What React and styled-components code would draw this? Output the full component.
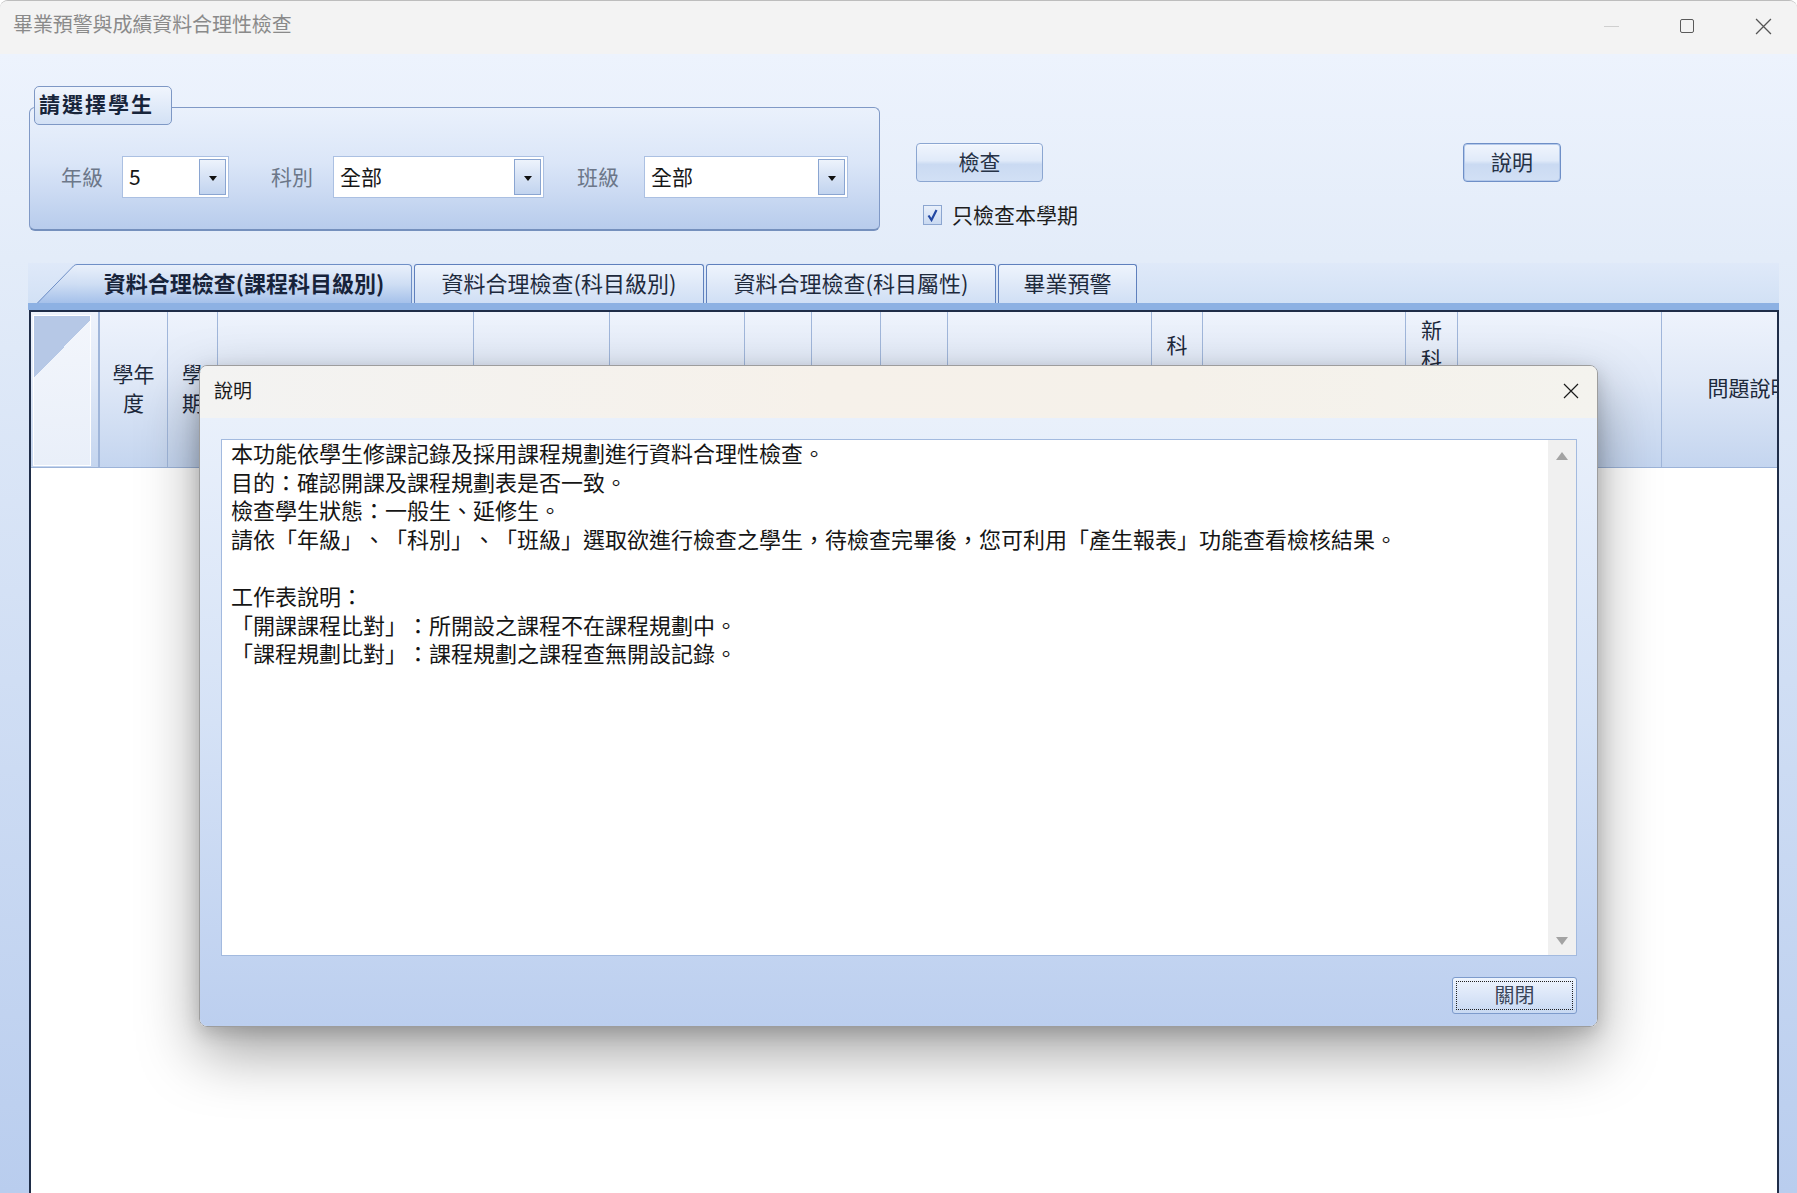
import React from 'react'
import styled, { createGlobalStyle } from 'styled-components'

const GlobalStyle = createGlobalStyle`
  html, body {
    margin: 0;
    padding: 0;
    width: 1797px;
    height: 1193px;
    overflow: hidden;
    background: #ffffff;
  }
  body {
    font-family: "Noto Sans CJK TC", "Noto Sans", sans-serif;
    text-spacing-trim: space-all;
  }
  * {
    box-sizing: border-box;
  }
`

const columns = [
  { w: 69, corner: true },
  { w: 68, label: '學年度' },
  { w: 50, label: '學期' },
  { w: 256 },
  { w: 136 },
  { w: 135 },
  { w: 67 },
  { w: 69 },
  { w: 67 },
  { w: 204 },
  { w: 51, label: '科目級別' },
  { w: 203 },
  { w: 52, label: '新科目級別' },
  { w: 204 },
  { w: 176, label: '問題說明' },
]

const helpText = `本功能依學生修課記錄及採用課程規劃進行資料合理性檢查。
目的：確認開課及課程規劃表是否一致。
檢查學生狀態：一般生、延修生。
請依「年級」、「科別」、「班級」選取欲進行檢查之學生，待檢查完畢後，您可利用「產生報表」功能查看檢核結果。

工作表說明：
「開課課程比對」：所開設之課程不在課程規劃中。
「課程規劃比對」：課程規劃之課程查無開設記錄。`

const tabs = [
  { label: '資料合理檢查(科目級別)', w: 290 },
  { label: '資料合理檢查(科目屬性)', w: 290 },
  { label: '畢業預警', w: 139 },
]

const App = () => {
  return (
    <>
      <GlobalStyle />
      <Window>
        <TitleBar>
          <WindowTitle>畢業預警與成績資料合理性檢查</WindowTitle>
          <Controls>
            <ControlButton>
              <MinimizeLine />
            </ControlButton>
            <ControlButton>
              <MaximizeBox />
            </ControlButton>
            <ControlButton>
              <CrossIcon size={17} color="#555" />
            </ControlButton>
          </Controls>
        </TitleBar>

        <Body>
          <TopRow>
            <GroupBox>
              <Legend>請選擇學生</Legend>
              <Frame>
                <Field>
                  <FieldLabel>年級</FieldLabel>
                  <Combo $w={107} $gap={17}>
                    <ComboText>5</ComboText>
                    <DropButton>
                      <DropArrow />
                    </DropButton>
                  </Combo>
                </Field>
                <Field $ml={42}>
                  <FieldLabel>科別</FieldLabel>
                  <Combo $w={211} $gap={18}>
                    <ComboText>全部</ComboText>
                    <DropButton>
                      <DropArrow />
                    </DropButton>
                  </Combo>
                </Field>
                <Field $ml={33}>
                  <FieldLabel>班級</FieldLabel>
                  <Combo $w={204} $gap={23}>
                    <ComboText>全部</ComboText>
                    <DropButton>
                      <DropArrow />
                    </DropButton>
                  </Combo>
                </Field>
              </Frame>
            </GroupBox>

            <ActionsColumn>
              <OfficeButton $w={127}>檢查</OfficeButton>
              <CheckRow>
                <CheckBox>
                  <svg width="13" height="14" viewBox="0 0 13 14">
                    <path d="M2.5 7.5 L5.5 12 L10.5 2" fill="none" stroke="#2348a3" strokeWidth="2.2" />
                  </svg>
                </CheckBox>
                <CheckLabel>只檢查本學期</CheckLabel>
              </CheckRow>
            </ActionsColumn>

            <HelpButton $w={98} $default>
              說明
            </HelpButton>
          </TopRow>

          <TabControl>
            <TabStrip>
              <SelectedTab>
                <svg width="40" height="39" viewBox="0 0 40 39">
                  <defs>
                    <linearGradient id="selTab" x1="0" y1="0" x2="0" y2="1">
                      <stop offset="0" stopColor="#e9f0fb" />
                      <stop offset="0.5" stopColor="#cfdef4" />
                      <stop offset="1" stopColor="#a5c1ea" />
                    </linearGradient>
                  </defs>
                  <path d="M0 39 L36.5 2 Q38 0.5 40 0.5 L40 39 Z" fill="url(#selTab)" />
                  <path d="M0.5 39 L36.5 2 Q38 0.5 40 0.5" fill="none" stroke="#6f8fc6" strokeWidth="1" />
                </svg>
                <SelectedTabBody>資料合理檢查(課程科目級別)</SelectedTabBody>
              </SelectedTab>
              {tabs.map((t) => (
                <Tab key={t.label} $w={t.w}>
                  {t.label}
                </Tab>
              ))}
            </TabStrip>

            <TabPanel>
              <Grid>
                <HeaderRow $cols={columns.map((c) => c.w + 'px').join(' ')}>
                  {columns.map((c, i) =>
                    c.corner ? (
                      <CornerCell key={i}>
                        <CornerInner />
                      </CornerCell>
                    ) : (
                      <HeaderCell key={i}>{c.label || ''}</HeaderCell>
                    )
                  )}
                </HeaderRow>
                <GridBody />
              </Grid>
            </TabPanel>
          </TabControl>
        </Body>

        <Dialog>
          <DialogTitleBar>
            <DialogTitle>說明</DialogTitle>
            <DialogClose>
              <CrossIcon size={16} color="#1a1a1a" />
            </DialogClose>
          </DialogTitleBar>
          <DialogBody>
            <TextBox>
              <TextContent>{helpText}</TextContent>
              <ScrollBar>
                <ScrollArrow $up />
                <ScrollArrow />
              </ScrollBar>
            </TextBox>
            <CloseButton>
              <FocusRing>關閉</FocusRing>
            </CloseButton>
          </DialogBody>
        </Dialog>
      </Window>
    </>
  )
}

const CrossIcon = ({ size, color }) => (
  <svg width={size} height={size} viewBox="0 0 16 16">
    <path d="M1 1 L15 15 M15 1 L1 15" stroke={color} strokeWidth="1.2" fill="none" />
  </svg>
)

const Window = styled.div`
  position: relative;
  width: 1797px;
  height: 1193px;
  display: flex;
  flex-direction: column;
  overflow: hidden;
  border-top: 1px solid #bdbdbd;
  border-radius: 8px 8px 0 0;
  background: #f3f3f3;
`

const TitleBar = styled.div`
  height: 53px;
  flex-shrink: 0;
  display: flex;
  align-items: center;
  padding-left: 13px;
  background: #f3f3f3;
`

const WindowTitle = styled.div`
  font-size: 20px;
  color: #8a8a8a;
  letter-spacing: -0.1px;
  margin-bottom: 8px;
`

const Controls = styled.div`
  margin-left: auto;
  display: flex;
  height: 100%;
  margin-right: -4px;
`

const ControlButton = styled.div`
  width: 76px;
  height: 100%;
  display: flex;
  align-items: center;
  justify-content: center;
  padding-bottom: 3px;
`

const MinimizeLine = styled.div`
  width: 15px;
  height: 1px;
  background: #cfcfcf;
`

const MaximizeBox = styled.div`
  width: 14px;
  height: 14px;
  border: 1px solid #5a5a5a;
  border-radius: 2px;
`

const Body = styled.div`
  flex: 1;
  display: flex;
  flex-direction: column;
  padding: 32px 18px 0 28px;
  background: linear-gradient(180deg, #edf3fd 0%, #e3ecf9 18%, #d0def4 55%, #b9cdee 100%);
  min-height: 0;
`

const TopRow = styled.div`
  display: flex;
  align-items: flex-start;
  flex-shrink: 0;
  height: 145px;
`

const GroupBox = styled.div`
  width: 851px;
  margin-left: 1px;
  display: flex;
  flex-direction: column;
`

const Legend = styled.div`
  position: relative;
  z-index: 1;
  align-self: flex-start;
  margin-left: 5px;
  margin-bottom: -18px;
  width: 138px;
  height: 39px;
  padding: 0 0 5px 4px;
  display: flex;
  align-items: center;
  border: 1px solid #7e98c5;
  border-radius: 5px;
  background: linear-gradient(180deg, #f0f5fd 0%, #d3e1f5 100%);
  font-size: 21px;
  font-weight: bold;
  letter-spacing: 2px;
  color: #17243a;
`

const Frame = styled.div`
  height: 124px;
  display: flex;
  align-items: center;
  padding: 17px 0 0 31px;
  border: 1px solid #8099c6;
  border-bottom: 2px solid #7590bd;
  border-radius: 6px;
  background: linear-gradient(180deg, #eaf1fc 0%, #dbe6f8 45%, #b8ccec 100%);
`

const Field = styled.div`
  display: flex;
  align-items: center;
  margin-left: ${(p) => p.$ml || 0}px;
`

const FieldLabel = styled.div`
  width: 44px;
  font-size: 21px;
  color: #6c7789;
  white-space: nowrap;
  margin-bottom: 3px;
`

const Combo = styled.div`
  width: ${(p) => p.$w}px;
  height: 42px;
  margin-left: ${(p) => p.$gap}px;
  display: flex;
  align-items: center;
  padding-left: 6px;
  background: #ffffff;
  border: 1px solid #abc0e2;
`

const ComboText = styled.div`
  font-size: 21px;
  color: #161616;
  margin-bottom: 3px;
`

const DropButton = styled.div`
  margin-left: auto;
  margin-right: 2px;
  width: 27px;
  height: 36px;
  display: flex;
  align-items: center;
  justify-content: center;
  border: 1px solid #8aa5d1;
  background: linear-gradient(180deg, #edf3fc 0%, #d6e2f5 50%, #c2d4ef 100%);
`

const DropArrow = styled.div`
  width: 0;
  height: 0;
  border-left: 4px solid transparent;
  border-right: 4px solid transparent;
  border-top: 5px solid #111;
  margin-top: 2px;
`

const ActionsColumn = styled.div`
  width: 170px;
  margin-left: 36px;
  margin-top: 57px;
  display: flex;
  flex-direction: column;
`

const OfficeButton = styled.div`
  width: ${(p) => p.$w}px;
  height: 39px;
  display: flex;
  align-items: center;
  justify-content: center;
  padding-bottom: 4px;
  font-size: 21px;
  color: #263246;
  border: 1px solid ${(p) => (p.$default ? '#6e8fc7' : '#8ba6d1')};
  border-radius: 4px;
  box-shadow: ${(p) => (p.$default ? 'inset 0 0 0 1px #b4c9ea' : 'inset 0 1px 0 #f7faff')};
  background: linear-gradient(180deg, #f0f5fd 0%, #e0eaf9 45%, #cadaf2 55%, #d2e0f5 100%);
`

const HelpButton = styled(OfficeButton)`
  margin-left: 377px;
  margin-top: 57px;
`

const CheckRow = styled.div`
  margin-top: 23px;
  margin-left: 7px;
  height: 20px;
  display: flex;
  align-items: center;
  gap: 10px;
`

const CheckBox = styled.div`
  width: 19px;
  height: 20px;
  flex-shrink: 0;
  display: flex;
  align-items: center;
  justify-content: center;
  border: 1px solid #8ca6d0;
  background: linear-gradient(180deg, #e9f0fb 0%, #c9d9f1 100%);
`

const CheckLabel = styled.div`
  font-size: 21px;
  line-height: 20px;
  color: #1e1e1e;
  white-space: nowrap;
  margin-bottom: 2px;
`

const TabControl = styled.div`
  margin-top: 32px;
  width: 1751px;
  flex: 1;
  display: flex;
  flex-direction: column;
  min-height: 0;
`

const TabStrip = styled.div`
  height: 40px;
  flex-shrink: 0;
  display: flex;
  align-items: flex-end;
  gap: 2px;
  padding-left: 9px;
  background: linear-gradient(180deg, #dfe9f9 0%, #d2e1f5 100%);
`

const SelectedTab = styled.div`
  height: 39px;
  display: flex;
  svg {
    display: block;
    flex-shrink: 0;
  }
`

const SelectedTabBody = styled.div`
  width: 335px;
  height: 39px;
  display: flex;
  align-items: center;
  justify-content: center;
  padding-bottom: 4px;
  border-top: 1px solid #6f8fc6;
  border-right: 1px solid #6f8fc6;
  border-radius: 0 4px 0 0;
  background: linear-gradient(180deg, #e9f0fb 0%, #cfdef4 50%, #a5c1ea 100%);
  font-size: 22px;
  font-weight: bold;
  color: #17233a;
  white-space: nowrap;
`

const Tab = styled.div`
  width: ${(p) => p.$w}px;
  height: 39px;
  display: flex;
  align-items: center;
  justify-content: center;
  padding-bottom: 4px;
  border: 1px solid #5f80bd;
  border-bottom: none;
  border-radius: 3px 3px 0 0;
  background: linear-gradient(180deg, #eef4fd 0%, #dfe9f8 50%, #d0dff5 100%);
  font-size: 22px;
  color: #1e2a3d;
  white-space: nowrap;
`

const TabPanel = styled.div`
  flex: 1;
  display: flex;
  flex-direction: column;
  border-top: 7px solid #8db1e3;
  min-height: 0;
`

const Grid = styled.div`
  flex: 1;
  display: flex;
  flex-direction: column;
  overflow: hidden;
  background: #ffffff;
  border: 2px solid #1f2d48;
  border-bottom: none;
  margin-left: 1px;
`

const HeaderRow = styled.div`
  display: grid;
  grid-template-columns: ${(p) => p.$cols};
  width: max-content;
  height: 156px;
  flex-shrink: 0;
  border-bottom: 1px solid #9cb3d8;
  background: linear-gradient(180deg, #eef3fc 0%, #dfe8f7 45%, #c4d5ef 100%);
`

const HeaderCell = styled.div`
  display: flex;
  align-items: center;
  justify-content: center;
  padding: 0 12px 4px;
  border-right: 1px solid #a0b6da;
  text-align: center;
  font-size: 21px;
  line-height: 29px;
  color: #1d293b;
  word-break: break-all;
  overflow: hidden;
`

const CornerCell = styled.div`
  padding: 3px 7px 1px 2px;
  border-right: 2px solid #a0b6da;
`

const CornerInner = styled.div`
  width: 100%;
  height: 100%;
  border: 1px solid #ffffff;
  background: linear-gradient(to bottom right, #b6c8e6 50%, transparent 50%) top left / 60px 62px no-repeat,
    linear-gradient(180deg, #f3f6fc 0%, #e9eff9 100%);
`

const GridBody = styled.div`
  flex: 1;
  background: #ffffff;
`

const Dialog = styled.div`
  position: absolute;
  left: 199px;
  top: 364px;
  width: 1399px;
  height: 662px;
  display: flex;
  flex-direction: column;
  overflow: hidden;
  border: 1px solid #9d9d9d;
  border-radius: 8px;
  box-shadow: 0 26px 60px rgba(0, 0, 0, 0.36), 0 6px 18px rgba(0, 0, 0, 0.16);
`

const DialogTitleBar = styled.div`
  height: 52px;
  flex-shrink: 0;
  display: flex;
  align-items: center;
  padding: 0 18px 0 14px;
  background: linear-gradient(90deg, #f3f3f2 0%, #f6f1ea 45%, #f5f1ea 70%, #f4f3ee 100%);
`

const DialogTitle = styled.div`
  font-size: 19px;
  color: #1a1a1a;
  margin-bottom: 6px;
`

const DialogClose = styled.div`
  margin-left: auto;
  display: flex;
  align-items: center;
  margin-bottom: 2px;
`

const DialogBody = styled.div`
  flex: 1;
  display: flex;
  flex-direction: column;
  padding: 21px 20px 12px 21px;
  background: linear-gradient(180deg, #e9f0fb 0%, #d5e2f6 50%, #bccfef 100%);
`

const TextBox = styled.div`
  height: 517px;
  display: flex;
  border: 1px solid #a3badf;
  background: #ffffff;
`

const TextContent = styled.div`
  flex: 1;
  padding: 0 9px;
  margin-top: -2px;
  font-size: 22px;
  line-height: 28.6px;
  color: #151515;
  white-space: pre-wrap;
`

const ScrollBar = styled.div`
  width: 28px;
  display: flex;
  flex-direction: column;
  align-items: center;
  justify-content: space-between;
  padding: 12px 0 10px;
  background: #f0f0f0;
`

const ScrollArrow = styled.div`
  width: 0;
  height: 0;
  border-left: 6px solid transparent;
  border-right: 6px solid transparent;
  ${(p) => (p.$up ? 'border-bottom: 8px solid #a3a3a3;' : 'border-top: 8px solid #a3a3a3;')}
`

const CloseButton = styled.div`
  align-self: flex-end;
  margin-top: 21px;
  width: 125px;
  height: 37px;
  padding: 3px;
  border: 1px solid #7d9bcc;
  border-radius: 3px;
  background: linear-gradient(180deg, #eef4fd 0%, #dbe6f8 50%, #c8d9f2 100%);
`

const FocusRing = styled.div`
  width: 100%;
  height: 100%;
  display: flex;
  align-items: center;
  justify-content: center;
  padding-bottom: 3px;
  border: 1px dotted #1f1f1f;
  font-size: 20px;
  color: #3a4558;
`

export default App
